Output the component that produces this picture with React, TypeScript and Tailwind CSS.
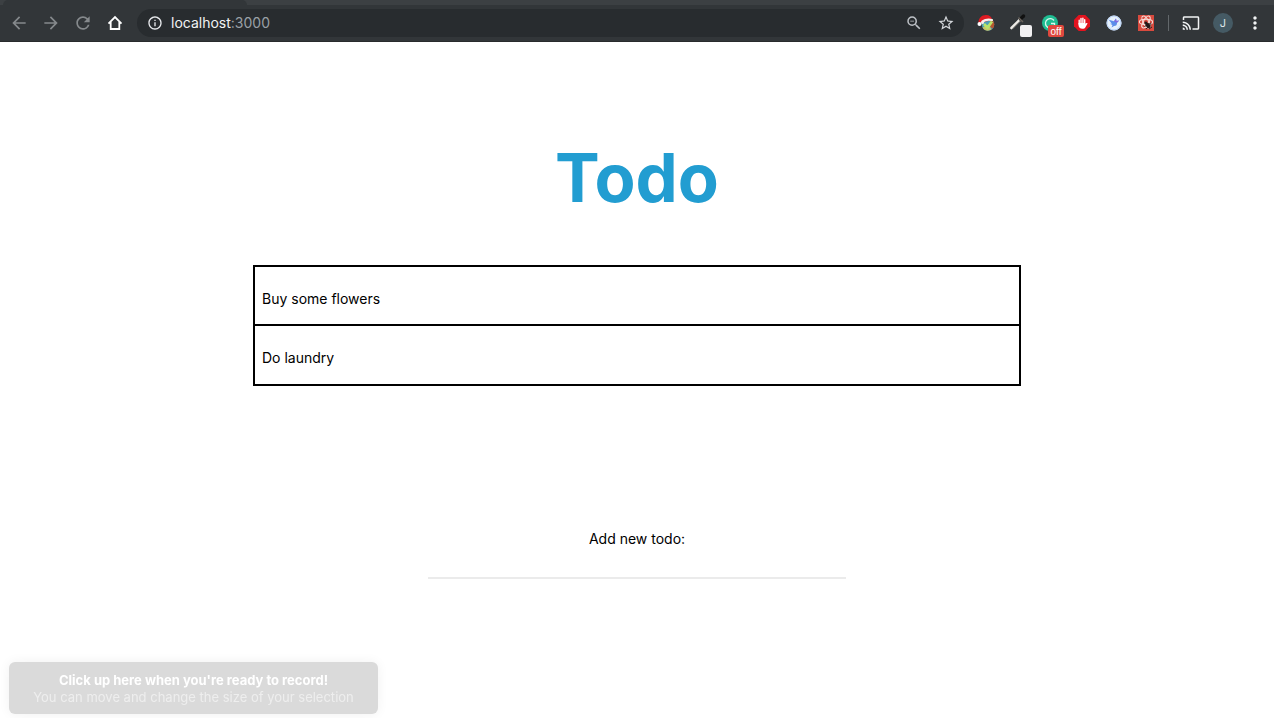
import React from 'react';
import {
  MdArrowBack,
  MdArrowForward,
  MdInfoOutline,
  MdMoreVert,
  MdOutlineCast,
  MdOutlineZoomOut,
  MdRefresh,
  MdStarBorder,
} from 'react-icons/md';

const todos = ['Buy some flowers', 'Do laundry'];

function BarButton({
  label,
  className = 'text-[#f1f3f4]',
  children,
}: {
  label: string;
  className?: string;
  children: React.ReactNode;
}) {
  return (
    <button
      type="button"
      aria-label={label}
      className={`flex h-8 w-8 shrink-0 items-center justify-center ${className}`}
    >
      {children}
    </button>
  );
}

function HomeIcon() {
  return (
    <svg width="16" height="16" viewBox="0 0 16 16" fill="none" stroke="currentColor" strokeWidth="1.800">
      <path d="M1.500 8.600 8 2l6.500 6.600M3.700 7v7h8.600V7" strokeLinejoin="miter" />
    </svg>
  );
}

function SantaIcon() {
  return (
    <svg width="18" height="18" viewBox="0 0 18 18">
      <circle cx="11" cy="10.500" r="6.200" fill="#4d9fb8" />
      <path d="M14 5a6.200 6.200 0 0 1 1.500 9.800l-3.500-3z" fill="#b5562f" />
      <path d="M5.500 13.500c2 3.500 6 4 9 2l-3-5z" fill="#c9c465" />
      <path d="m7 10 3.500 3.500L15 7.500" fill="none" stroke="#b9e36a" strokeWidth="2.800" />
      <path d="M1.500 9C1.300 4.500 4.500 1 9 1c3.500 0 5.700 1.600 6 5L5 8.500z" fill="#dd1a22" />
      <path d="M5.500 7.500c2.500-1.800 6-2.300 9.500-1.500" fill="none" stroke="#f7efeb" strokeWidth="2.200" strokeLinecap="round" />
      <circle cx="2.500" cy="10" r="2" fill="#fff" />
      <circle cx="5.500" cy="8.500" r="1.500" fill="#f7efeb" />
    </svg>
  );
}

function DropperIcon() {
  return (
    <svg width="22" height="22" viewBox="0 0 22 22">
      <path d="m4.500 16 8-8" stroke="#eceae6" strokeWidth="2.600" strokeLinecap="round" />
      <path d="m5.500 16.800 8-8" stroke="#8e8c87" strokeWidth="1" />
      <path d="m13.500 7 3-3" stroke="#111" strokeWidth="3.400" strokeLinecap="round" />
      <path d="m11.500 5.500 4.500 4.500" stroke="#6b645e" strokeWidth="1.500" />
    </svg>
  );
}

function GrammarIcon() {
  return (
    <svg width="16" height="16" viewBox="0 0 16 16">
      <circle cx="8" cy="8" r="8" fill="#1fbd92" />
      <path d="M12 5.500A4.700 4.700 0 1 0 11 12" fill="none" stroke="#d9f6ec" strokeWidth="1.300" />
      <path d="M9 8.500h3.500V11" fill="none" stroke="#d9f6ec" strokeWidth="1.300" />
    </svg>
  );
}

function StopHandIcon() {
  return (
    <svg width="16" height="16" viewBox="0 0 16 16">
      <path d="M4.700 0h6.600L16 4.700v6.600L11.300 16H4.700L0 11.300V4.700z" fill="#e3131e" />
      <path
        d="M5.200 9V5.200M7 8V3.500M8.900 8V3.300M10.700 9V4.700"
        stroke="#fff"
        strokeWidth="1.400"
        strokeLinecap="round"
      />
      <path d="M4.500 8h6.900v1.200l1-1.100c.6-.5 1.300 0 1 .7l-2.100 3.600c-.7 1-1.500 1.300-2.800 1.300-2.500 0-4-1.500-4-3.700z" fill="#fff" />
    </svg>
  );
}

function BirdIcon() {
  return (
    <svg width="16" height="16" viewBox="0 0 16 16">
      <circle cx="8" cy="8" r="7.500" fill="#e6f1fc" />
      <circle cx="8" cy="8" r="7" fill="none" stroke="#b5cff5" />
      <path d="M2.800 4.800 8 6.300 10 3.500l.5 2.500 2.700-.5-2.200 2.200c.2 2-.8 3.300-3 3.300l-2.500 1.500 1-2.500-2.500-1.200h1.800z" fill="#5c8eea" />
      <path d="M8 6.300 10 3.500l.5 2.500 2.700-.5L11 7.700z" fill="#8468de" />
    </svg>
  );
}

function AtomBugIcon() {
  return (
    <svg width="16" height="16" viewBox="0 0 16 16">
      <rect width="16" height="16" fill="#d84a3e" />
      <g fill="none" stroke="#f6dcd8" strokeWidth="1.100">
        <ellipse cx="8" cy="7" rx="6.600" ry="2.700" />
        <ellipse cx="8" cy="7" rx="6.600" ry="2.700" transform="rotate(60 8 7)" />
        <ellipse cx="8" cy="7" rx="6.600" ry="2.700" transform="rotate(120 8 7)" />
      </g>
      <ellipse cx="10" cy="10.500" rx="2.100" ry="2.800" fill="#231a1a" transform="rotate(-40 10 10.500)" />
      <circle cx="7.800" cy="8" r="1.400" fill="#231a1a" />
      <path d="m6.500 11.500 6.500-3.500M8 14l5.500-5M11 14l3-2" stroke="#231a1a" strokeWidth=".9" />
    </svg>
  );
}

function BrowserBar() {
  return (
    <header className="bg-[#3c4043]">
      <div className="flex h-[5px] pl-[3px]">
        <div className="w-[244px] rounded-t-md bg-[#323639]" />
      </div>
      <div className="flex h-[37px] items-center border-b border-[#292b2d] bg-[#323639] px-[3px]">
        <BarButton label="Back" className="text-[#85898c]">
          <MdArrowBack size={20} />
        </BarButton>
        <BarButton label="Forward" className="text-[#85898c]">
          <MdArrowForward size={20} />
        </BarButton>
        <BarButton label="Reload" className="text-[#85898c]">
          <MdRefresh size={20} />
        </BarButton>
        <BarButton label="Home" className="text-white">
          <HomeIcon />
        </BarButton>
        <div className="mx-1.5 flex h-7 min-w-0 flex-1 items-center rounded-full bg-[#282c2f] pl-2.5 pr-0.5">
          <MdInfoOutline size={16} className="shrink-0 text-[#e8eaed]" />
          <p className="ml-2 flex-1 truncate text-sm text-[#9aa0a6]">
            <span className="text-[#f1f3f4]">localhost</span>:3000
          </p>
          <BarButton label="Zoom out" className="text-[#bdc1c6]">
            <MdOutlineZoomOut size={18} />
          </BarButton>
          <BarButton label="Bookmark this page" className="text-[#d5d8dc]">
            <MdStarBorder size={18} />
          </BarButton>
        </div>
        <BarButton label="Tag checker">
          <SantaIcon />
        </BarButton>
        <BarButton label="Color picker">
          <span className="relative">
            <DropperIcon />
            <span className="absolute top-[13px] left-[13px] h-3 w-3 rounded-xs bg-[#f1f0f2]" />
          </span>
        </BarButton>
        <BarButton label="Writing assistant">
          <span className="relative">
            <GrammarIcon />
            <span className="absolute top-2.5 left-1.5 flex h-3 w-4 items-center justify-center rounded-xs bg-[#e0483e] font-['Liberation_Sans',sans-serif] text-[10px] text-white">
              off
            </span>
          </span>
        </BarButton>
        <BarButton label="Ad blocker">
          <StopHandIcon />
        </BarButton>
        <BarButton label="Bird">
          <BirdIcon />
        </BarButton>
        <BarButton label="Component inspector">
          <AtomBugIcon />
        </BarButton>
        <div className="mx-1.5 h-4 w-px bg-[#63686b]" />
        <BarButton label="Cast">
          <MdOutlineCast size={18} />
        </BarButton>
        <BarButton label="Profile">
          <span className="flex h-5 w-5 items-center justify-center rounded-full bg-[#455a64] text-[11px] text-[#dfe5e8]">
            J
          </span>
        </BarButton>
        <BarButton label="Menu">
          <MdMoreVert size={20} />
        </BarButton>
      </div>
    </header>
  );
}

export default function App() {
  return (
    <div className="min-h-screen bg-white font-['Inter','Liberation_Sans',sans-serif] text-black">
      <BrowserBar />
      <main className="mx-auto flex max-w-3xl flex-col items-center pt-24">
        <h1 className="text-[67px] leading-20 font-bold text-[#229dd1]">Todo</h1>
        <ul className="mt-[47px] w-full divide-y-2 divide-black border-2 border-black text-sm">
          {todos.map((todo) => (
            <li key={todo} className="flex h-[58px] items-center px-[7px] pt-1.5 first:h-[59px]">
              {todo}
            </li>
          ))}
        </ul>
        <form className="mt-[143px] flex w-[418px] max-w-full flex-col items-center text-sm">
          <label htmlFor="new-todo">Add new todo:</label>
          <input
            id="new-todo"
            type="text"
            className="mt-1 h-[26px] w-full border-b-2 border-[#ebebeb] text-center outline-none"
          />
        </form>
      </main>
      <aside className="fixed bottom-1 left-[9px] flex h-[52px] w-[369px] flex-col items-center justify-center rounded-md bg-[#dadada] pt-0.5 text-[13px] leading-[17px] shadow-[0_0_12px_rgba(0,0,0,0.06)]">
        <strong className="font-bold text-white">Click up here when you're ready to record!</strong>
        <span className="text-[#eeeeee]">You can move and change the size of your selection</span>
      </aside>
    </div>
  );
}
